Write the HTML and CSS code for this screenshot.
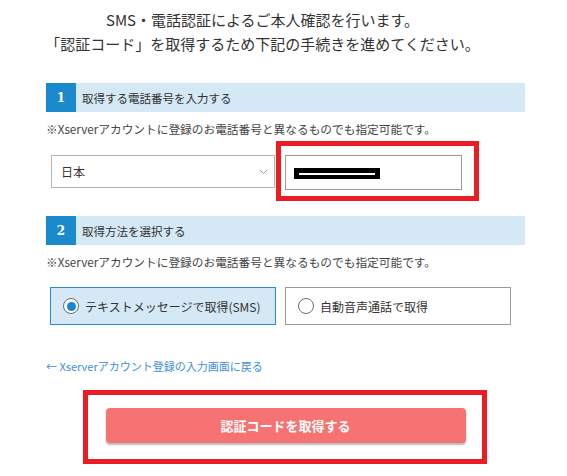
FILE: index.html
```html
<!DOCTYPE html>
<html lang="ja">
<head>
<meta charset="utf-8">
<link rel="stylesheet" href="styles.css">
</head>
<body>
<div class="page">
  <div class="title">
    <p>SMS・電話認証によるご本人確認を行います。</p>
    <p>「認証コード」を取得するため下記の手続きを進めてください。</p>
  </div>

  <div class="content">
    <div class="step step-first">
      <span class="num">1</span>
      <span class="step-label">取得する電話番号を入力する</span>
    </div>
    <p class="note">※Xserverアカウントに登録のお電話番号と異なるものでも指定可能です。</p>
    <div class="phone-row">
      <div class="select">
        <span>日本</span>
        <svg class="chev" width="9" height="6" viewBox="0 0 9 6"><path d="M1 1 L4.5 4.5 L8 1" fill="none" stroke="#9a9a9a" stroke-width="1"/></svg>
      </div>
      <div class="phone-input"><span class="redact"><span class="redact-line"></span></span></div>
    </div>

    <div class="step step-second">
      <span class="num">2</span>
      <span class="step-label">取得方法を選択する</span>
    </div>
    <p class="note">※Xserverアカウントに登録のお電話番号と異なるものでも指定可能です。</p>
    <div class="methods">
      <div class="method selected"><span class="radio on"></span><span>テキストメッセージで取得(SMS)</span></div>
      <div class="method"><span class="radio"></span><span>自動音声通話で取得</span></div>
    </div>

    <a class="back" href="#">← Xserverアカウント登録の入力画面に戻る</a>

    <div class="btn-wrap">
      <button class="submit">認証コードを取得する</button>
    </div>
  </div>

  <div class="mark mark-phone"></div>
  <div class="mark mark-button"></div>
</div>
</body>
</html>
```

FILE: styles.css
```css
html, body {
  margin: 0;
  padding: 0;
  background: #fff;
}
body {
  font-family: "Noto Sans CJK JP", "Noto Sans", sans-serif;
  color: #333;
}
.page {
  position: relative;
  width: 525px;
  height: 476px;
}
.title {
  padding-top: 8px;
  text-align: center;
  font-size: 15px;
  line-height: 24px;
  color: #333;
}
.title p {
  margin: 0;
}
.content {
  margin-left: 46px;
  width: 479px;
}
.step {
  display: flex;
  align-items: stretch;
  height: 29px;
  background: #d4e8f5;
}
.step-first {
  margin-top: 27px;
}
.step-second {
  margin-top: 26px;
}
.num {
  width: 30px;
  background: #1b8acd;
  color: #fff;
  font-weight: bold;
  font-size: 12px;
  display: flex;
  align-items: center;
  justify-content: center;
  font-family: "DejaVu Serif", serif;
}
.step-label {
  display: flex;
  align-items: center;
  padding-left: 6px;
  font-size: 11.5px;
  color: #333;
}
.note {
  margin: 8px 0 0;
  font-size: 11.7px;
  line-height: 18px;
  color: #444;
}
.phone-row {
  display: flex;
  align-items: flex-start;
  gap: 10px;
  margin-top: 17px;
  padding-left: 5px;
}
.select {
  box-sizing: border-box;
  width: 224px;
  height: 33px;
  border: 1px solid #b4b4b4;
  display: flex;
  align-items: center;
  justify-content: space-between;
  padding: 0 6px 0 9px;
  font-size: 12px;
  color: #333;
}
.chev {
  margin-top: 1px;
}
.phone-input {
  box-sizing: border-box;
  width: 177px;
  height: 35px;
  border: 1px solid #9c9c9c;
  padding: 12px 0 0 8px;
}
.redact {
  display: block;
  width: 86px;
  height: 11px;
  background: #000;
  position: relative;
}
.redact-line {
  display: block;
  position: absolute;
  left: 5px;
  top: 5px;
  width: 76px;
  height: 2px;
  background: #fff;
}
.methods {
  display: flex;
  gap: 9px;
  margin-top: 16px;
  padding-left: 4px;
}
.method {
  box-sizing: border-box;
  width: 226px;
  height: 38px;
  border: 1px solid #9a9a9a;
  display: flex;
  align-items: center;
  padding-left: 12px;
  gap: 6px;
  font-size: 12px;
  color: #333;
}
.method.selected {
  background: #d4e8f5;
  border-color: #2a8bd2;
}
.radio {
  box-sizing: border-box;
  width: 16px;
  height: 16px;
  border-radius: 50%;
  border: 1.5px solid #6b6b6b;
  background: #fff;
  display: flex;
  align-items: center;
  justify-content: center;
}
.radio.on::after {
  content: "";
  width: 9px;
  height: 9px;
  border-radius: 50%;
  background: #1a86d6;
}
.back {
  display: block;
  margin-top: 32px;
  font-size: 11px;
  line-height: 18px;
  color: #3f8fd8;
  text-decoration: none;
}
.btn-wrap {
  display: flex;
  justify-content: center;
  margin-top: 33px;
}
.submit {
  width: 360px;
  height: 35px;
  border: none;
  border-radius: 4px;
  background: #f77272;
  color: #fff;
  font-family: "Noto Sans CJK JP", sans-serif;
  font-weight: bold;
  font-size: 13px;
  box-shadow: 0 2px 2px rgba(0, 0, 0, 0.28);
  padding: 0;
}
.mark {
  position: absolute;
  border: 5px solid #ec1c24;
  box-sizing: border-box;
}
.mark-phone {
  left: 276px;
  top: 141px;
  width: 203px;
  height: 60px;
}
.mark-button {
  left: 83px;
  top: 390px;
  width: 404px;
  height: 74px;
}
```
